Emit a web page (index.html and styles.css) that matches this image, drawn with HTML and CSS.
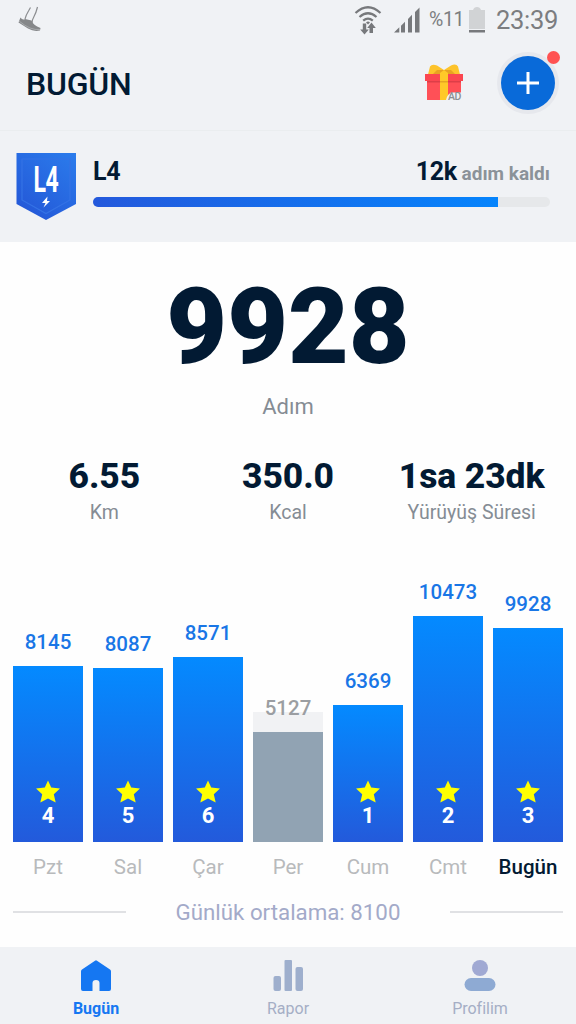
FILE: index.html
```html
<!DOCTYPE html>
<html lang="tr">
<head>
<meta charset="utf-8">
<title>Adım Sayar</title>
<link rel="stylesheet" href="styles.css">
</head>
<body>
<header class="header">
  <div class="status">
    <svg class="status-shoe" width="24" height="26" viewBox="0 0 24 26"><path d="M12.500 1.500 10.500 5Q8 9 7 13M19.500 1Q18 7 16 10.500T14 17" fill="none" stroke="#8b8d90" stroke-width="1.200"/><path d="M2.500 11.500Q4.500 14.500 7 13L13.500 14.500Q15 19 22.500 22L22 24.500Q16 26 10 22.500L.5 16.500Z" fill="#858789"/><path d="M1 15Q7 20 12 22T22 23.500" fill="none" stroke="#b5b7ba" stroke-width=".7"/></svg>
    <div class="status-right">
      <svg width="28" height="30" viewBox="0 0 28 30" fill="none" stroke="#77797c" stroke-width="2.200"><path d="M1.500 8Q14-3.500 26.500 8M5.500 12Q14 4.500 22.500 12M9.200 15.700Q14 11.500 18.800 15.700"/><path d="M12 17.500 14 19.500 16 17.500Q14 15.500 12 17.500Z" fill="#77797c" stroke="none"/><path d="M8.800 18.500h3.400v6h2.600L10.500 29.500 6.200 24.500H8.800ZM15.500 28v-5h-2.300L17.500 17.500l4.300 5.500H19v5Z" fill="#77797c" stroke="none"/></svg>
      <svg class="signal" width="26" height="26" viewBox="0 0 26 26" fill="#77797c"><path d="M0 25.500 5.300 20.300V25.500ZM7 18.700 11 14.800V25.500H7ZM14 12 18 7.800V25.500H14ZM21 5 25.500.500V25.500H21Z"/></svg>
      <span class="battery-text">%11</span>
      <svg class="battery" width="16" height="26" viewBox="0 0 16 26"><path d="M0 3H4Q5 0 8 0T12 3H16V22H0Z" fill="#d1d3d5"/><path d="M0 23H16V25.500H0Z" fill="#77797c"/></svg>
      <span class="clock">23:39</span>
    </div>
  </div>
  <div class="titlebar">
    <h1 class="title">BUGÜN</h1>
    <div class="gift">
      <svg width="40" height="37" viewBox="0 0 40 37"><path d="M4 10.500 6 2.500Q8-.5 13 1.500L20 6 27 1.500Q32-1 34 2.500L36 10.500Z" fill="#fdc32b"/><path d="M9 10 13 6H27L31 10Z" fill="#e8a222"/><path d="M3 17H37V36H3Z" fill="#ff5057"/><path d="M1 10H39V17H1Z" fill="#fb4650"/><path d="M3 17H37V18.500H3Z" fill="#dd3e48"/><path d="M16 9 20 6 24 9V36H16Z" fill="#ffc928"/><path d="M16 17H24V18.500H16Z" fill="#e5a522"/><path d="M22 36Q24 28 29 28.500H40V37H22Z" fill="#f0f2f5"/></svg>
      <span class="gift-ad">AD</span>
    </div>
    <div class="add"><svg width="24" height="24" viewBox="0 0 24 24"><path d="M12 1V23M1 12H23" stroke="#fff" stroke-width="3"/></svg><span class="add-dot"></span></div>
  </div>
  <div class="level">
    <div class="badge">
      <svg width="60" height="68" viewBox="0 0 60 68"><defs><linearGradient id="shield" x1="1" y1="0" x2="0.300" y2="1"><stop offset="0" stop-color="#2b7cec"/><stop offset="1" stop-color="#2459d8"/></linearGradient></defs><path d="M.5 0H60V51L30 67 .5 51Z" fill="url(#shield)"/><path d="M6 6H54V47L30 60.500 6 47Z" fill="none" stroke="#3472e5" stroke-width="1.200"/><path d="M31.500 43.500 26 50H29.500L27.500 54.500 34 48H31Z" fill="#fff"/></svg>
      <span class="badge-text">L4</span>
    </div>
    <div class="level-info">
      <div class="level-row"><span class="level-name">L4</span><span class="level-left"><b class="level-num">12k</b> adım kaldı</span></div>
      <div class="progress"><div class="progress-fill"></div></div>
    </div>
  </div>
</header>
<main class="main">
  <div class="steps">9928</div>
  <div class="steps-label">Adım</div>
  <div class="stats">
    <div class="stat"><div class="stat-value">6.55</div><div class="stat-label">Km</div></div>
    <div class="stat"><div class="stat-value">350.0</div><div class="stat-label">Kcal</div></div>
    <div class="stat"><div class="stat-value">1sa 23dk</div><div class="stat-label">Yürüyüş Süresi</div></div>
  </div>
  <div class="chart">
    <div class="col"><span class="value">8145</span><div class="bar" style="height:175.500px"><svg class="star" viewBox="0 0 24 23"><use href="#star"/></svg><span class="streak">4</span></div></div>
    <div class="col"><span class="value">8087</span><div class="bar" style="height:174px"><svg class="star" viewBox="0 0 24 23"><use href="#star"/></svg><span class="streak">5</span></div></div>
    <div class="col"><span class="value">8571</span><div class="bar" style="height:184.500px"><svg class="star" viewBox="0 0 24 23"><use href="#star"/></svg><span class="streak">6</span></div></div>
    <div class="col"><span class="value value-missed">5127</span><div class="bar bar-missed" style="height:110px"></div></div>
    <div class="col"><span class="value">6369</span><div class="bar" style="height:137px"><svg class="star" viewBox="0 0 24 23"><use href="#star"/></svg><span class="streak">1</span></div></div>
    <div class="col"><span class="value">10473</span><div class="bar" style="height:225.500px"><svg class="star" viewBox="0 0 24 23"><use href="#star"/></svg><span class="streak">2</span></div></div>
    <div class="col"><span class="value">9928</span><div class="bar" style="height:213.500px"><svg class="star" viewBox="0 0 24 23"><use href="#star"/></svg><span class="streak">3</span></div></div>
  </div>
  <div class="days"><span>Pzt</span><span>Sal</span><span>Çar</span><span>Per</span><span>Cum</span><span>Cmt</span><span class="today">Bugün</span></div>
  <div class="average"><span class="rule"></span><span>Günlük ortalama: 8100</span><span class="rule"></span></div>
</main>
<nav class="nav">
  <div class="tab tab-active"><svg width="32" height="32" viewBox="0 0 32 32"><path d="M15 .7Q16 0 17 .7L30 9.500Q31 10.200 31 11.500V29Q31 31 29 31H19.500V23Q19.500 20 16 20T12.500 23V31H3Q1 31 1 29V11.500Q1 10.200 2 9.500Z" fill="#1577f2"/></svg><span>Bugün</span></div>
  <div class="tab"><svg width="32" height="32" viewBox="0 0 32 32" fill="#9eafcd"><rect x="1.500" y="16" width="7.500" height="15" rx="2"/><rect x="12.500" y="0" width="7.500" height="31" rx="1"/><rect x="23.500" y="7" width="7.500" height="24" rx="2"/></svg><span>Rapor</span></div>
  <div class="tab"><svg width="32" height="32" viewBox="0 0 32 32"><circle cx="16" cy="8" r="8" fill="#a0a9d3"/><rect x=".5" y="18" width="31" height="13" rx="6.500" fill="#8eaad3"/></svg><span>Profilim</span></div>
</nav>
<svg width="0" height="0" class="defs"><defs><path id="star" fill="#ffff00" d="M12 0.500 15.200 7.500 24 8.600 17.800 14.300 19.700 22.500 12 18.500 4.300 22.500 6.200 14.300 0 8.600 8.800 7.500Z"/></defs></svg>
</body>
</html>
```

FILE: styles.css
```css
* { box-sizing: border-box; }
body { margin: 0; width: 576px; height: 1024px; overflow: hidden; display: flex; flex-direction: column; background: #fefefe; color: #021a33; font-family: Roboto, sans-serif; }
svg { display: block; flex: none; }
.defs { position: absolute; }
.header { height: 242px; flex: none; background: #f0f2f5; }
.status { height: 40px; display: flex; justify-content: space-between; padding: 0 17px 0 18px; }
.status-shoe { margin-top: 6px; }
.status-right { display: flex; align-items: center; color: #7b7d80; line-height: 40px; }
.signal { margin-left: 12px; }
.battery-text { width: 34px; margin-left: 9px; font-size: 19.5px; letter-spacing: -0.4px; white-space: nowrap; }
.battery { margin-left: 6px; }
.clock { width: 63px; margin-left: 11px; font-size: 25.5px; letter-spacing: -0.3px; white-space: nowrap; }
.titlebar { height: 91px; border-bottom: 1px solid #eaedef; display: flex; align-items: flex-start; padding: 12px 19px 0 26px; }
.title { margin: 12px auto 0 0; font-size: 32px; line-height: 40px; font-weight: 500; letter-spacing: -0.2px; }
.gift { position: relative; margin: 12px 35px 0 0; }
.gift-ad { position: absolute; left: 24px; top: 28px; font-size: 10.5px; line-height: 10px; color: #8c8f92; font-weight: 500; letter-spacing: -0.5px; }
.add { position: relative; width: 58px; height: 62px; display: flex; align-items: center; justify-content: center; }
.add::before { content: ""; position: absolute; left: 2px; top: 4px; width: 54px; height: 54px; border-radius: 50%; background: #096ad9; box-shadow: 0 0 0 4px #e6e8ed; }
.add svg { position: relative; }
.add-dot { position: absolute; left: 48px; top: -1px; width: 13px; height: 13px; border-radius: 50%; background: #ff5252; }
.level { display: flex; padding: 22px 26px 0 16px; }
.badge { position: relative; width: 60px; height: 68px; }
.badge-text { position: absolute; left: 0; top: 7px; width: 60px; text-align: center; color: #fff; font-size: 36px; line-height: 40px; font-weight: 700; letter-spacing: -0.5px; transform: scaleX(0.640); }
.level-info { flex: 1; margin-left: 17px; }
.level-row { display: flex; justify-content: space-between; align-items: baseline; height: 44px; padding-top: 1px; line-height: 36px; font-weight: 700; }
.level-name { font-size: 25px; font-weight: 700; letter-spacing: -0.3px; }
.level-left { font-size: 19px; color: #8b9299; }
.level-num { font-size: 25px; font-weight: 700; letter-spacing: -0.3px; color: #021a33; }
.progress { height: 10px; border-radius: 5px; overflow: hidden; background: #e6e8ea; }
.progress-fill { width: 405px; height: 10px; background: linear-gradient(90deg, #2459dc, #0584fc); }
.main { height: 705px; flex: none; }
.steps { margin-top: 26px; font-size: 105px; line-height: 120px; font-weight: 900; text-align: center; }
.steps-label { margin-top: 4px; font-size: 22px; line-height: 30px; color: #858c94; text-align: center; }
.stats { display: flex; margin: 34px 12.500px 0; }
.stat { flex: 1; text-align: center; }
.stat-value { font-size: 35.500px; line-height: 40px; font-weight: 800; letter-spacing: -0.1px; white-space: nowrap; }
.stat-label { margin-top: 4px; font-size: 19.500px; line-height: 26px; color: #858c94; }
.chart { height: 306.500px; margin-top: 9px; padding: 0 13px; display: grid; grid-template-columns: repeat(7, 70px); column-gap: 10px; align-items: end; }
.col { display: flex; flex-direction: column; align-items: center; }
.value { height: 36px; font-size: 20.500px; line-height: 24px; font-weight: 500; color: #1976e6; }
.value-missed { align-self: stretch; text-align: center; color: #9b9ea2; background: linear-gradient(transparent 16px, #f1f2f4 16px); }
.bar { width: 70px; display: flex; flex-direction: column; justify-content: flex-end; align-items: center; padding-bottom: 14px; background: linear-gradient(#048aff, #235adb); }
.bar-missed { background: #91a3b3; }
.star { width: 24px; height: 23px; }
.streak { font-size: 22px; line-height: 25px; font-weight: 700; color: #fff; }
.days { display: grid; grid-template-columns: repeat(7, 70px); column-gap: 10px; padding: 0 13px; margin-top: 11px; font-size: 20.500px; line-height: 29px; color: #b8babc; text-align: center; }
.today { color: #021a33; font-weight: 500; }
.average { display: flex; justify-content: space-between; align-items: center; padding: 0 13px; margin-top: 15px; font-size: 22.300px; line-height: 30px; color: #a3aac9; }
.rule { width: 113px; height: 2px; background: #e0e1e4; }
.nav { height: 77px; flex: none; display: flex; background: #f0f2f5; }
.tab { flex: 1; display: flex; flex-direction: column; align-items: center; padding-top: 13px; font-size: 16px; line-height: 20px; color: #a5aec5; }
.tab span { margin-top: 7px; }
.tab-active { color: #1577f2; font-weight: 700; }
```
